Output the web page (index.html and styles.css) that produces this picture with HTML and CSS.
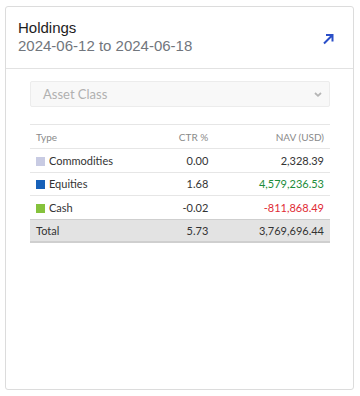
FILE: index.html
```html
<!DOCTYPE html>
<html>
<head>
<meta charset="utf-8">
<link rel="stylesheet" href="styles.css">
</head>
<body>
<div class="card">
  <div class="card-head">
    <div class="titles">
      <div class="title">Holdings</div>
      <div class="dates">2024-06-12 to 2024-06-18</div>
    </div>
    <svg class="expand" width="12" height="12" viewBox="0 0 12 12"><path d="M2 10.5 L10 2.5 M4 2 H10.5 V8.5" fill="none" stroke="#2a4fc8" stroke-width="2"/></svg>
  </div>
  <div class="card-body">
    <div class="select">
      <span>Asset Class</span>
      <svg width="10" height="7" viewBox="0 0 10 7"><path d="M2 2 L5 4.8 L8 2" fill="none" stroke="#b5b5b5" stroke-width="1.8"/></svg>
    </div>
    <table class="grid">
      <thead>
        <tr><th class="type">Type</th><th class="num">CTR %</th><th class="num">NAV (USD)</th></tr>
      </thead>
      <tbody>
        <tr><td><span class="sw sw-com"></span>Commodities</td><td class="num">0.00</td><td class="num">2,328.39</td></tr>
        <tr><td><span class="sw sw-eq"></span>Equities</td><td class="num">1.68</td><td class="num pos">4,579,236.53</td></tr>
        <tr><td><span class="sw sw-cash"></span>Cash</td><td class="num">-0.02</td><td class="num neg">-811,868.49</td></tr>
        <tr class="total"><td>Total</td><td class="num">5.73</td><td class="num">3,769,696.44</td></tr>
      </tbody>
    </table>
  </div>
</div>
</body>
</html>
```
FILE: styles.css
```css
html, body { margin: 0; padding: 0; background: #fff; }
body { width: 360px; height: 396px; padding: 6px 0 0 5px; box-sizing: border-box; }
.card {
  width: 349px; height: 384px; box-sizing: border-box;
  border: 1px solid #dcdcdc; border-radius: 3px; background: #fff;
  font-family: "Liberation Sans", Arial, sans-serif;
}
.card-head {
  display: flex; justify-content: space-between; align-items: flex-start;
  padding: 12px 19px 12px 12px; border-bottom: 1px solid #e2e2e2; height: 62px; box-sizing: border-box;
}
.title { font-size: 15px; color: #1d1d1d; line-height: 18px; }
.dates { font-size: 15px; color: #71767d; line-height: 18px; }
.expand { margin-top: 14px; }
.card-body { padding: 12px 23px 0 24px; }
.select {
  height: 26px; box-sizing: border-box; border: 1px solid #ececec; border-radius: 2px;
  background: #f8f8f8; display: flex; align-items: center; justify-content: space-between;
  padding: 0 6px 0 12px; font-family: Lato, sans-serif; font-size: 13px; color: #b0b0b0;
}
.grid {
  width: 100%; margin-top: 17px; border-collapse: collapse;
  font-family: Lato, sans-serif; font-size: 11px; color: #333;
  border-top: 1px solid #e6e6e6;
}
.grid th { font-weight: normal; color: #8a8a8a; font-size: 10px; height: 23px; text-align: left; padding: 0 6px; }
.grid td { height: 22.5px; padding: 0 6px; border-top: 1px solid #e6e6e6; }
.grid .num { text-align: right; }
.grid th.type { width: 110px; }
.grid td:nth-child(2), .grid th:nth-child(2) { padding-right: 5px; }
.sw { display: inline-block; width: 9px; height: 9px; margin-right: 4px; vertical-align: -1px; }
.sw-com { background: #c8cbe3; }
.sw-eq { background: #1761b9; }
.sw-cash { background: #85c23c; }
.pos { color: #1c8c3a; }
.neg { color: #e02b35; }
.total td { background: #e3e3e3; border-top: 1px solid #cfcfcf; border-bottom: 2px solid #cfcfcf; height: 21px; }
```
